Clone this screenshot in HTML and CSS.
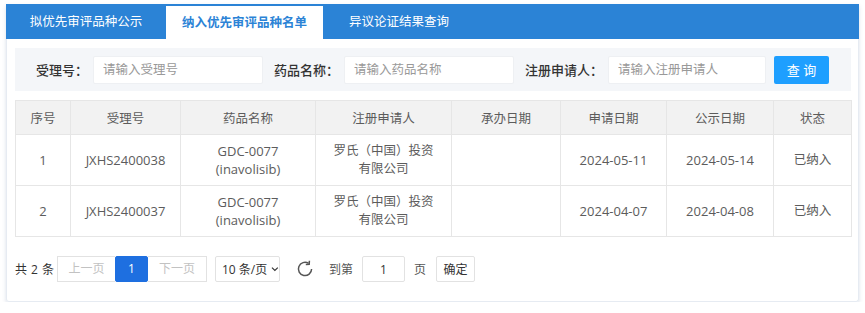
FILE: index.html
```html
<!DOCTYPE html>
<html>

<head>
  <title>优先审评品种名单</title>
  <link rel="stylesheet" href="styles.css">
</head>

<body>
  <div class="card">
    <div class="tabs">
      <div class="tab tab-first">拟优先审评品种公示</div>
      <div class="tab tab-active">纳入优先审评品种名单</div>
      <div class="tab tab-last">异议论证结果查询</div>
    </div>

    <div class="card-body">
      <form class="search">
        <label class="label label-first" for="acceptNo">受理号：</label>
        <input class="input input-wide" id="acceptNo" type="text" placeholder="请输入受理号">
        <label class="label" for="drugName">药品名称：</label>
        <input class="input input-wide" id="drugName" type="text" placeholder="请输入药品名称">
        <label class="label" for="applicant">注册申请人：</label>
        <input class="input input-narrow" id="applicant" type="text" placeholder="请输入注册申请人">
        <button class="btn-search" type="button">查 询</button>
      </form>

      <table class="grid">
        <colgroup>
          <col style="width: 55px">
          <col style="width: 110px">
          <col style="width: 135px">
          <col style="width: 136px">
          <col style="width: 109px">
          <col style="width: 106px">
          <col style="width: 107px">
          <col style="width: 78px">
        </colgroup>
        <thead>
          <tr>
            <th>序号</th>
            <th>受理号</th>
            <th>药品名称</th>
            <th>注册申请人</th>
            <th>承办日期</th>
            <th>申请日期</th>
            <th>公示日期</th>
            <th>状态</th>
          </tr>
        </thead>
        <tbody>
          <tr>
            <td>1</td>
            <td>JXHS2400038</td>
            <td>GDC-0077<br>(inavolisib)</td>
            <td class="cjk">罗氏（中国）投资<br>有限公司</td>
            <td></td>
            <td>2024-05-11</td>
            <td>2024-05-14</td>
            <td class="cjk">已纳入</td>
          </tr>
          <tr>
            <td>2</td>
            <td>JXHS2400037</td>
            <td>GDC-0077<br>(inavolisib)</td>
            <td class="cjk">罗氏（中国）投资<br>有限公司</td>
            <td></td>
            <td>2024-04-07</td>
            <td>2024-04-08</td>
            <td class="cjk">已纳入</td>
          </tr>
        </tbody>
      </table>

      <div class="pager">
        <span class="pager-count">共 2 条</span>
        <div class="pager-links">
          <a class="page page-prev disabled">上一页</a>
          <a class="page page-curr">1</a>
          <a class="page page-next disabled">下一页</a>
        </div>
        <div class="pager-limit">
          <span>10 条/页</span>
          <svg class="chevron" width="8" height="6" viewBox="0 0 8 6">
            <path d="M1 1.5 L4 4.5 L7 1.5" fill="none" stroke="#333" stroke-width="1.2"/>
          </svg>
        </div>
        <svg class="refresh" width="18" height="18" viewBox="0 0 18 18">
          <path d="M15.6 9 A6.6 6.6 0 1 1 12.6 3.4" fill="none" stroke="#555" stroke-width="1.5"/>
          <path d="M13.4 0.8 L13.2 4.3 L9.8 4.6" fill="none" stroke="#555" stroke-width="1.5"/>
        </svg>
        <span class="pager-text">到第</span>
        <input class="pager-input" type="text" value="1">
        <span class="pager-text">页</span>
        <button class="pager-btn" type="button">确定</button>
      </div>
    </div>
  </div>
</body>

</html>
```

FILE: styles.css
```css
body {
  margin: 0;
  background: #fff;
  font-family: "Open Sans", "Noto Sans CJK SC", sans-serif;
  font-size: 13px;
  color: #666;
}
.card {
  width: 851px;
  height: 297px;
  margin: 4px 0 0 6px;
  border: 1px solid #e6ebf2;
  border-top: none;
  border-radius: 0 0 3px 3px;
  box-shadow: 0 2px 4px rgba(60, 90, 140, 0.18);
}
.tabs {
  display: flex;
  height: 35px;
  margin: 0 -1px;
  background: #2b83d6;
}
.tab {
  line-height: 35px;
  color: #fff;
  font-size: 12.5px;
  text-align: center;
}
.tab-first {
  width: 160px;
}
.tab-active {
  width: 157px;
  height: 33px;
  margin-top: 2px;
  line-height: 33px;
  background: #fff;
  color: #2b83d6;
  font-weight: bold;
}
.tab-last {
  padding: 0 26px;
}
.card-body {
  padding: 9px 7px 0 8px;
}
.search {
  display: flex;
  align-items: center;
  height: 43px;
  margin: 0;
  padding-left: 21px;
  background: #f4f6f9;
}
.label {
  margin: 0 5px 0 11px;
  color: #333;
  font-weight: 500;
  font-size: 13px;
}
.label-first {
  margin-left: 0;
}
.input {
  box-sizing: border-box;
  height: 28px;
  padding: 0 9px;
  border: 1px solid #eef0f3;
  border-radius: 2px;
  background: #fff;
  font-family: inherit;
  font-size: 12.5px;
  color: #333;
  outline: none;
}
.input::placeholder {
  color: #999;
}
.input-wide {
  width: 170px;
}
.input-narrow {
  width: 158px;
}
.btn-search {
  width: 55px;
  height: 28px;
  margin-left: 8px;
  border: none;
  border-radius: 2px;
  background: #1e9fff;
  color: #fff;
  font-family: inherit;
  font-size: 13px;
  cursor: pointer;
}
.grid {
  width: 836px;
  margin-top: 9px;
  border-collapse: collapse;
  table-layout: fixed;
}
.grid th,
.grid td {
  border: 1px solid #e6e6e6;
  text-align: center;
  font-weight: normal;
  color: #5c5c5c;
}
.grid th {
  height: 33px;
  padding: 0;
  background: #f2f2f2;
  font-size: 12.5px;
}
.grid td {
  height: 50px;
  padding: 0 6px;
  line-height: 18px;
}
.grid .cjk {
  font-size: 12.5px;
}
.pager {
  display: flex;
  align-items: center;
  height: 26px;
  margin-top: 19px;
  font-size: 12px;
  color: #333;
  white-space: nowrap;
}
.pager-count {
  width: 42px;
  word-spacing: 1px;
}
.pager-links {
  display: flex;
  height: 26px;
}
.page {
  box-sizing: border-box;
  height: 26px;
  line-height: 24px;
  border: 1px solid #e2e2e2;
  text-align: center;
  background: #fff;
}
.page-prev {
  width: 58px;
  border-right: none;
}
.page-next {
  width: 59px;
  border-left: none;
}
.page-curr {
  width: 33px;
  border-color: #1e6fe0;
  background: #1e6fe0;
  color: #fff;
  border-radius: 2px;
}
.disabled {
  color: #c2c2c2;
}
.pager-limit {
  display: flex;
  align-items: center;
  box-sizing: border-box;
  width: 65px;
  height: 26px;
  margin-left: 8px;
  padding-left: 6px;
  border: 1px solid #e2e2e2;
  border-radius: 2px;
  font-size: 12px;
  color: #333;
}
.chevron {
  margin-left: 4px;
}
.refresh {
  margin: 0 15px 0 16px;
}
.pager-text {
  color: #555;
}
.pager-input {
  box-sizing: border-box;
  width: 43px;
  height: 26px;
  margin: 0 9px;
  border: 1px solid #e2e2e2;
  border-radius: 2px;
  text-align: center;
  font-family: inherit;
  font-size: 12px;
  color: #333;
}
.pager-btn {
  box-sizing: border-box;
  width: 39px;
  height: 26px;
  margin-left: 10px;
  padding: 0;
  border: 1px solid #e2e2e2;
  border-radius: 2px;
  background: #fff;
  font-family: inherit;
  font-size: 12px;
  color: #333;
}
```
